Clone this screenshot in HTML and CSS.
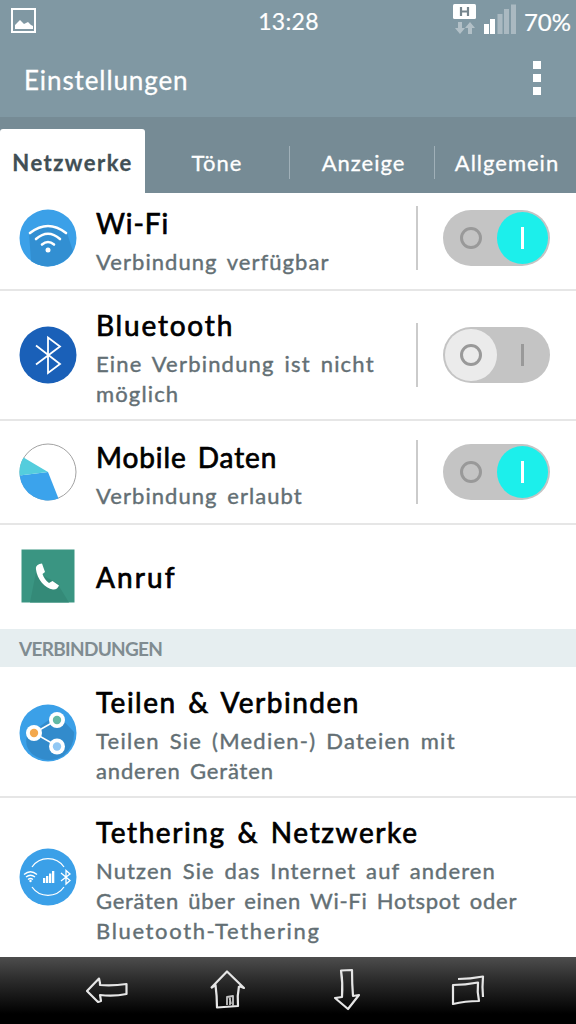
FILE: index.html
```html
<!DOCTYPE html>
<html lang="de">
<head>
    <meta charset="UTF-8">
    <meta name="viewport" content="width=device-width, initial-scale=1.0">
    <title>Einstellungen</title>
    <link rel="stylesheet" href="styles.css">
</head>
<body>

    <div class="status">
        <svg class="status-left" width="26" height="26" viewBox="0 0 26 26">
            <rect x="1" y="1" width="23" height="23" fill="none" stroke="#fff" stroke-width="2"/>
            <path d="M4 21 V17 L7 14 L9 12 L11 14 L13 16 L17 14 L20 17 L22 18 V21 Z" fill="#fff"/>
        </svg>
        <span class="clock">13:28</span>
        <div class="status-right">
            <svg width="24" height="32" viewBox="0 0 24 32">
                <rect x="0" y="0" width="23" height="15" rx="1.500" fill="#fff"/>
                <path d="M8 3 V12 M15 3 V12 M8 7.500 H15" stroke="#76858d" stroke-width="2.200"/>
                <path d="M5 18 H9 V24 H12 L7 30 L2 24 H5 Z M15 30 H19 V24 H22 L17 18 L12 24 H15 Z" fill="#b2c0c7"/>
            </svg>
            <svg width="33" height="32" viewBox="0 0 33 32">
                <path d="M0 20 H5 V30 H0 Z M6 15 H11 V30 H6 Z" fill="#fff"/>
                <path d="M13.500 10 H18.500 V30 H13.500 Z M20 5 H25 V30 H20 Z M27 .500 H32 V30 H27 Z" fill="#aab9c1"/>
            </svg>
            <span class="battery">70%</span>
        </div>
    </div>

    <div class="header">
        <h1>Einstellungen</h1>
        <div class="menu"><i></i><i></i><i></i></div>
    </div>

    <div class="tabs">
        <div class="tab active"><span>Netzwerke</span></div>
        <div class="tab"><span>Töne</span></div>
        <div class="tab line"><span>Anzeige</span></div>
        <div class="tab line"><span>Allgemein</span></div>
    </div>

    <div class="row wifi">
        <svg class="icon" width="58" height="58" viewBox="0 0 58 58">
            <circle cx="29" cy="29" r="28.500" fill="#3ba0e8"/>
            <path d="M10 24 Q29 7 48 24 L54 42 A28.500 28.500 0 0 1 12 52 Z" fill="#328fd2"/>
            <g fill="none" stroke="#fff" stroke-width="2.600" stroke-linecap="round">
                <path d="M11 24 Q29 10 47 24"/>
                <path d="M17 30 Q29 19.500 41 30"/>
                <path d="M23 35.500 Q29 30.500 35 35.500"/>
            </g>
            <circle cx="29" cy="41" r="2.500" fill="#fff"/>
        </svg>
        <div class="text">
            <h2 class="t1">Wi-Fi</h2>
            <p class="s1">Verbindung verfügbar</p>
        </div>
        <div class="switch on">
            <div class="track"><b class="zero"></b><b class="one"></b></div>
        </div>
    </div>

    <div class="row bluetooth">
        <svg class="icon" width="58" height="58" viewBox="0 0 58 58">
            <circle cx="29" cy="29" r="28.500" fill="#1a60b8"/>
            <path d="M17 19.500 L41 38 L29 47 V11.500 L41 20.500 L17 38.500" fill="none" stroke="#fff" stroke-width="1.800"/>
        </svg>
        <div class="text">
            <h2 class="t2">Bluetooth</h2>
            <p class="s2">Eine Verbindung ist nicht</p>
            <p class="s3">möglich</p>
        </div>
        <div class="switch">
            <div class="track"><b class="zero"></b><b class="one"></b></div>
        </div>
    </div>

    <div class="row mobile">
        <svg class="icon" width="58" height="58" viewBox="0 0 58 58">
            <circle cx="29" cy="29" r="28" fill="#fff" stroke="#8a8a8a" stroke-width="0.800"/>
            <path d="M29 29 L.600 32.500 A28.500 28.500 0 0 0 39.500 55.500 Z" fill="#3ba3ec"/>
            <path d="M29 29 L4.500 14.500 A28.500 28.500 0 0 0 .600 32.500 Z" fill="#54cddd"/>
        </svg>
        <div class="text">
            <h2 class="t3">Mobile Daten</h2>
            <p class="s4">Verbindung erlaubt</p>
        </div>
        <div class="switch on">
            <div class="track"><b class="zero"></b><b class="one"></b></div>
        </div>
    </div>

    <div class="row call">
        <svg class="icon" width="58" height="58" viewBox="0 0 58 58">
            <rect x="2.500" y="1.500" width="53" height="53" fill="#3a9582"/>
            <path d="M17 24 L11 54.500 H50 L38 35 Z" fill="#348a78"/>
            <path d="M20.500 16 C17.500 17 16.500 19 17 21.500 C18 31 26 40.500 34 41.500 C37 41.800 39 40 40 37.500 L33.500 33 L30 35 C27 33 24.500 29.500 23.500 26 L26 24 L23 15.500 Z" fill="#fff"/>
        </svg>
        <div class="text">
            <h2 class="t4">Anruf</h2>
        </div>
    </div>

    <div class="section"><span>VERBINDUNGEN</span></div>

    <div class="row share">
        <svg class="icon" width="58" height="58" viewBox="0 0 58 58">
            <circle cx="29" cy="29" r="28.500" fill="#3ba0e8"/>
            <path d="M38 10 L55 28 Q56 42 44 52 Q28 61 13 50 Q5 42 8 32 Z" fill="#328bcc"/>
            <path d="M38 16 L15 29 L38 42" fill="none" stroke="#fff" stroke-width="1.500"/>
            <g fill="#fff"><circle cx="38" cy="16" r="8"/><circle cx="15" cy="29" r="8"/><circle cx="38" cy="42.500" r="8"/></g>
            <circle cx="38" cy="16" r="4.200" fill="#62b9a5"/>
            <circle cx="15" cy="29" r="4.200" fill="#f3a84e"/>
            <circle cx="38" cy="42.500" r="4.200" fill="#91c8f4"/>
        </svg>
        <div class="text">
            <h2 class="t5">Teilen &amp; Verbinden</h2>
            <p class="s5">Teilen Sie (Medien-) Dateien mit</p>
            <p class="s6">anderen Geräten</p>
        </div>
    </div>

    <div class="row tether">
        <svg class="icon" width="58" height="58" viewBox="0 0 58 58">
            <circle cx="29" cy="29" r="28.500" fill="#3ba0e8"/>
            <g fill="none" stroke="#fff" stroke-width="1.300">
                <path d="M13 19 A19.500 19.500 0 0 1 45 19 M13 39 A19.500 19.500 0 0 0 45 39"/>
                <path d="M5 26.500 Q11.500 21 18 26.500 M7 29 Q11.500 25.500 16 29 M9 31.500 Q11.500 29.500 14 31.500"/>
                <path d="M42 25 L51 32.500 L47 36 V22.500 L51 26 L42 33"/>
            </g>
            <circle cx="11.500" cy="33" r="1.200" fill="#fff"/>
            <path d="M24 30 h2.300 v5 h-2.300 Z M27 28 h2.300 v7 h-2.300 Z M30 25.500 h2.300 v9.500 h-2.300 Z M33 23 h2.300 v12 h-2.300 Z" fill="#fff"/>
        </svg>
        <div class="text">
            <h2 class="t6">Tethering &amp; Netzwerke</h2>
            <p class="s7">Nutzen Sie das Internet auf anderen</p>
            <p class="s8">Geräten über einen Wi-Fi Hotspot oder</p>
            <p class="s9">Bluetooth-Tethering</p>
        </div>
    </div>

    <div class="nav">
        <svg width="44" height="44" viewBox="0 0 44 44">
            <path d="M15 15 L14 10.500 L2 23 L13 34 L16 33 L15 27 Q29 28.500 41.500 26 V16 Q28 18 15 17 Z"/>
        </svg>
        <svg width="44" height="44" viewBox="0 0 44 44">
            <path d="M4 20 L20 3.500 L37 20 L32 18 M4 20 L8.500 17 Q10 28 10 39.500 L31 38 Q30 28 32 18"/>
            <path class="door" d="M20 37 V29 L26 28 V38 M22.500 30 L24 36 M23 29 V37"/>
        </svg>
        <svg width="44" height="44" viewBox="0 0 44 44">
            <path d="M12 2.500 L23 2 Q23 16 24 28 L30 27 L19 41 L6 30 L13 29 Q14 15 12 2.500 Z"/>
        </svg>
        <svg width="44" height="44" viewBox="0 0 44 44">
            <path d="M2 17 Q14 17 27 14.500 Q26 24 28 33 Q14 33 2 36 Z"/>
            <path d="M7 11 Q19 11 32 8.500 Q31 19 32 29"/>
        </svg>
    </div>

</body>
</html>
```
FILE: styles.css
```css
* {
    box-sizing: border-box;
}
body {
    margin: 0;
    width: 576px;
    height: 1024px;
    overflow: hidden;
    background-color: #fff;
    font-family: Lato, "Open Sans", sans-serif;
}
h1, h2, p {
    margin: 0;
    white-space: nowrap;
}
svg {
    display: block;
    flex: none;
}
.status {
    height: 42px;
    padding: 0 5px 0 11px;
    display: grid;
    grid-template-columns: 1fr auto 1fr;
    align-items: center;
    background-color: #8098a3;
    color: #fff;
    font-size: 23px;
    -webkit-text-stroke: 0.2px #fff;
}
.clock {
    margin-right: 5px;
    letter-spacing: 0.3px;
}
.battery {
    font-size: 24px;
}
.status-right {
    display: flex;
    justify-content: flex-end;
    align-items: center;
    gap: 7px;
}
.status-right svg {
    margin-bottom: 2px;
}
.header {
    height: 75px;
    padding: 0 35px 3px 24px;
    display: flex;
    justify-content: space-between;
    align-items: center;
    background-color: #8098a3;
    color: #fff;
}
.header h1 {
    padding-top: 3px;
    font-size: 26px;
    font-weight: normal;
    letter-spacing: 0.9px;
    -webkit-text-stroke: 0.3px #fff;
}
.menu {
    display: grid;
    gap: 5px;
}
.menu i {
    width: 8px;
    height: 8px;
    background-color: #fff;
}
.tabs {
    height: 76px;
    padding-top: 12px;
    display: grid;
    grid-template-columns: 145px 144px 145px 142px;
    background-color: #768b95;
    color: #fff;
    font-size: 22px;
    letter-spacing: 1px;
    -webkit-text-stroke: 0.3px;
}
.tab {
    padding-top: 2px;
    display: flex;
    align-items: center;
    justify-content: center;
}
.tab.active {
    height: 64px;
    border-radius: 3px 3px 0 0;
    background-color: #fff;
    color: #414f55;
    font-weight: bold;
    letter-spacing: 1.5px;
}
.tab.line::before {
    content: "";
    width: 1px;
    height: 33px;
    margin-right: auto;
    background-color: #a0b0b8;
}
.tab.line span {
    margin-right: auto;
    padding-left: 3px;
}
.row {
    display: flex;
    align-items: flex-end;
    padding-left: 19px;
    border-bottom: 2px solid #e6e6e6;
}
.icon {
    margin-right: 19px;
}
.text {
    width: 320px;
}
h2 {
    font-size: 28px;
    font-weight: normal;
    line-height: 48px;
    color: #000;
    -webkit-text-stroke: 0.7px #000;
}
p {
    font-size: 22px;
    line-height: 30px;
    word-spacing: 3px;
    color: #636f74;
    -webkit-text-stroke: 0.4px #636f74;
}
.t1 { letter-spacing: 0.9px; }
.t2 { letter-spacing: 1.8px; }
.t3 { letter-spacing: 0.9px; word-spacing: 3px; }
.t4 { letter-spacing: 2.1px; }
.t5 { letter-spacing: 1.5px; word-spacing: 3px; }
.t6 { letter-spacing: 1.6px; word-spacing: 3px; }
.s1 { letter-spacing: 1.05px; }
.s2 { letter-spacing: 1.2px; }
.s3 { letter-spacing: 1.15px; }
.s4 { letter-spacing: 1.05px; }
.s5 { letter-spacing: 1.25px; }
.s6 { letter-spacing: 0.85px; }
.s7 { letter-spacing: 1.1px; }
.s8 { letter-spacing: 0.72px; }
.s9 { letter-spacing: 1.65px; }
.wifi {
    height: 98px;
    padding-bottom: 12px;
}
.bluetooth {
    height: 130px;
    padding-bottom: 10px;
}
.mobile {
    height: 104px;
    padding-bottom: 12px;
}
.call {
    height: 104px;
    align-items: center;
    border: 0;
}
.share {
    height: 131px;
    padding-bottom: 10px;
}
.tether {
    height: 159px;
    padding-bottom: 11px;
    border: 0;
}
.wifi .icon {
    margin-bottom: 10px;
}
.bluetooth .icon {
    margin-bottom: 25px;
}
.mobile .icon {
    margin-bottom: 10px;
}
.share .icon {
    margin-bottom: 24px;
}
.tether .icon {
    margin-bottom: 40px;
}
.switch {
    height: 64px;
    padding-left: 25px;
    display: flex;
    align-items: center;
    border-left: 2px solid #cbcbcb;
}
.wifi .switch {
    margin-bottom: 7px;
}
.bluetooth .switch {
    margin-bottom: 22px;
}
.mobile .switch {
    margin-bottom: 7px;
}
.track {
    width: 107px;
    height: 56px;
    padding: 2px;
    display: flex;
    justify-content: space-between;
    border-radius: 28px;
    background-color: #c4c4c4;
}
.track b {
    width: 52px;
    height: 52px;
    display: grid;
    place-items: center;
    border-radius: 50%;
}
.zero::before {
    content: "";
    width: 16px;
    height: 16px;
    border: 3px solid #999;
    border-radius: 50%;
}
.one::before {
    content: "";
    width: 3px;
    height: 22px;
    background-color: #999;
}
.switch .zero {
    background-color: #ebebeb;
}
.switch.on .zero {
    background-color: transparent;
}
.switch.on .one {
    background-color: #1cefeb;
}
.switch.on .one::before {
    background-color: #fff;
}
.section {
    height: 38px;
    padding-left: 19px;
    display: flex;
    align-items: center;
    background-color: #e6eef0;
    color: #808c91;
    font-size: 19px;
    font-weight: bold;
    letter-spacing: -0.7px;
}
.nav {
    height: 67px;
    padding: 11px 0 0 85px;
    display: flex;
    gap: 78px;
    background: linear-gradient(#4d4d4d, #2b2b2b 35%, #000 85%);
}
.nav path {
    fill: none;
    stroke: #e6e6e6;
    stroke-width: 2.2;
    stroke-linejoin: round;
}
.nav .door {
    stroke: #c4c4c4;
    stroke-width: 1.8;
}
```
